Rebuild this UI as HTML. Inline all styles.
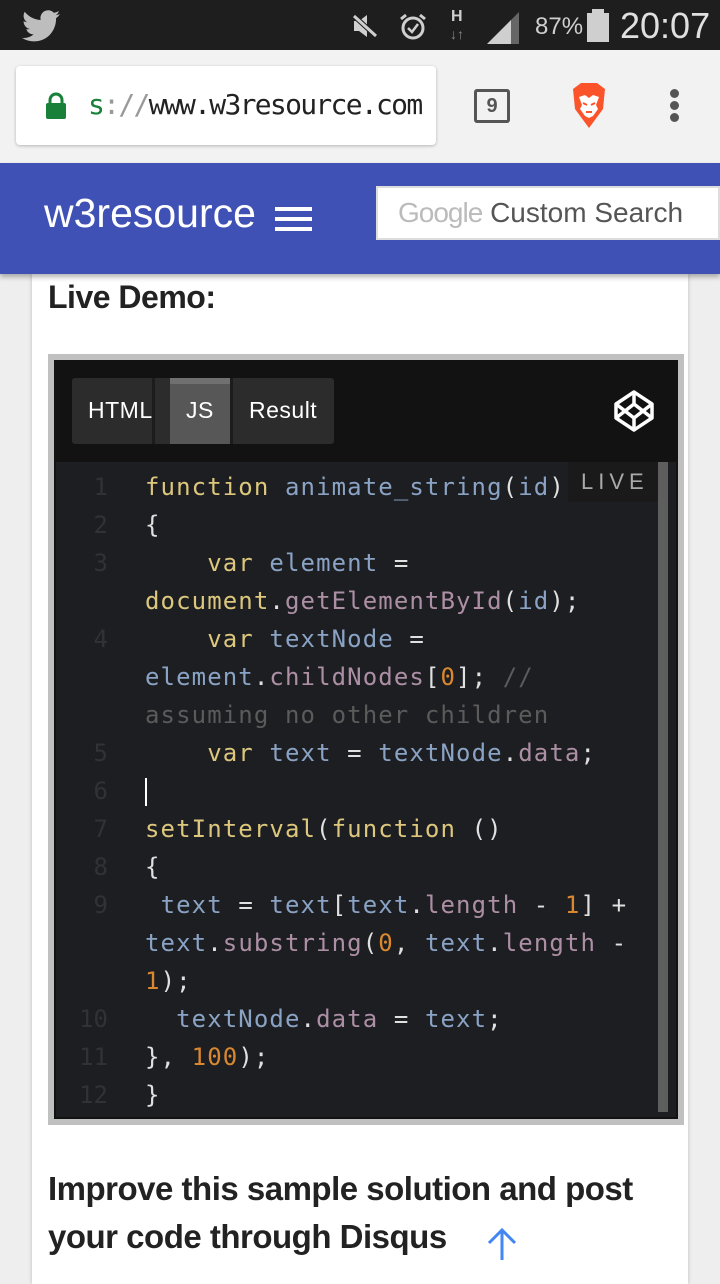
<!DOCTYPE html>
<html><head><meta charset="utf-8">
<style>
*{margin:0;padding:0;box-sizing:border-box}
body{width:720px;height:1280px;overflow:hidden;background:#eeeeee;font-family:"Liberation Sans",sans-serif;position:relative}
.abs{position:absolute}
.status{left:0;top:0;width:720px;height:50px;background:#1e1e1e}
.chrome{left:0;top:50px;width:720px;height:113px;background:#f2f2f2}
.url{left:16px;top:66px;width:420px;height:79px;background:#fff;border-radius:4px;box-shadow:0 1px 3px rgba(0,0,0,.25)}
.hdr{left:0;top:163px;width:720px;height:111px;background:#3f51b5;box-shadow:0 3px 5px rgba(0,0,0,.3)}
.card{left:32px;top:274px;width:656px;height:1010px;background:#fff;box-shadow:0 0 4px rgba(0,0,0,.2)}
.frame{left:48px;top:354px;width:636px;height:771px;background:#c0c0c0}
.inner{left:54px;top:360px;width:624px;height:759px;background:#121212}
.code{left:56px;top:462px;width:620px;height:655px;background:#1d1e22}
.ln,.cd{font-family:"DejaVu Sans Mono","Liberation Mono",monospace;font-size:24px;line-height:38px;white-space:pre}
.ln{left:56px;top:468px;width:52px;text-align:right;color:#313235}
.cd{left:145px;top:468px;color:#e0e0e0;letter-spacing:1.1px}
.k{color:#dcc77c}.v{color:#8aa3c4}.m{color:#ad8fa5}.n{color:#d9882f}.c{color:#5b5b5b}
.dot{position:absolute;left:670px;width:9px;height:9px;border-radius:50%;background:#555}
</style></head><body>
<div class="abs status"></div>
<svg class="abs" style="left:22px;top:10px" width="38" height="32" viewBox="0 0 24 20"><path fill="#bdbdbd" d="M24 2.4a9.8 9.8 0 0 1-2.8.8A4.9 4.9 0 0 0 23.3.5a9.9 9.9 0 0 1-3.1 1.2A4.9 4.9 0 0 0 11.8 6.2 14 14 0 0 1 1.7 1 4.9 4.9 0 0 0 3.2 7.6a4.9 4.9 0 0 1-2.2-.6 4.9 4.9 0 0 0 3.9 4.9 4.9 4.9 0 0 1-2.2.1 4.9 4.9 0 0 0 4.6 3.4A9.900 9.9 0 0 1 0 17.5 14 14 0 0 0 7.5 19.7c9.1 0 14-7.5 14-14v-.6A10 10 0 0 0 24 2.4z"/></svg>
<svg class="abs" style="left:350px;top:12px" width="30" height="28" viewBox="0 0 30 28"><path fill="#cfcfcf" d="M4 9h5l8-6v22l-8-6H4z"/><path stroke="#1e1e1e" stroke-width="5" d="M3 3l24 22"/><path stroke="#cfcfcf" stroke-width="3" d="M4 4l22 20"/></svg>
<svg class="abs" style="left:398px;top:12px" width="30" height="30" viewBox="0 0 30 30"><circle cx="15" cy="16" r="10" fill="none" stroke="#cfcfcf" stroke-width="3"/><path d="M10 16l4 4 6-8" fill="none" stroke="#cfcfcf" stroke-width="2.5"/><path d="M3 7l5-4M27 7l-5-4" stroke="#cfcfcf" stroke-width="3"/></svg>
<div class="abs" style="left:451px;top:8px;color:#cfcfcf;font:bold 16px 'Liberation Sans';">H</div>
<div class="abs" style="left:450px;top:26px;color:#888;font:bold 14px 'Liberation Sans';">↓↑</div>
<svg class="abs" style="left:487px;top:12px" width="32" height="32" viewBox="0 0 32 32"><path d="M0 32h24V8z" fill="#cfcfcf"/><path d="M24 8L32 0v32h-8z" fill="#666"/></svg>
<div class="abs" style="left:535px;top:13px;color:#cfcfcf;font:24px 'Liberation Sans';">87%</div>
<div class="abs" style="left:587px;top:13px;width:22px;height:29px;background:#cfcfcf"></div>
<div class="abs" style="left:592px;top:9px;width:12px;height:5px;background:#cfcfcf"></div>
<div class="abs" style="left:620px;top:5px;color:#e0e0e0;font:36px 'Liberation Sans';">20:07</div>

<div class="abs chrome"></div>
<div class="abs url"></div>
<svg class="abs" style="left:45px;top:92px" width="22" height="28" viewBox="0 0 22 28"><path d="M5 12V8a6 6 0 0 1 12 0v4" fill="none" stroke="#188038" stroke-width="3"/><rect x="1" y="11" width="20" height="16" rx="2" fill="#188038"/></svg>
<div class="abs" style="left:88px;top:88px;font:28px 'DejaVu Sans Mono',monospace;letter-spacing:-1.7px;color:#222"><span style="color:#188038">s</span><span style="color:#999">://</span>www.w3resource.com</div>
<div class="abs" style="left:474px;top:89px;width:36px;height:34px;border:3px solid #555;border-radius:3px;color:#555;font:bold 20px 'Liberation Sans';text-align:center;line-height:28px">9</div>
<svg class="abs" style="left:569px;top:83px" width="40" height="45" viewBox="0 0 40 45"><path d="M4 6l8-6h16l8 6-2 20-14 19L6 26z" fill="#fb542b"/><path d="M10 14l6-2 4 3 4-3 6 2-3 8 2 4-5 7-4 2-4-2-5-7 2-4z" fill="#fff"/><path d="M14 20l4 2M26 20l-4 2M17 29h6" stroke="#fb542b" stroke-width="2"/></svg>
<div class="dot" style="top:89px"></div>
<div class="dot" style="top:101px"></div>
<div class="dot" style="top:113px"></div>

<div class="abs card"></div>
<div class="abs hdr"></div>
<div class="abs" style="left:44px;top:190px;color:#fff;font:41px 'Liberation Sans';">w3resource</div>
<div class="abs" style="left:275px;top:207px;width:37px;height:4px;background:#fff;box-shadow:0 10px 0 #fff,0 20px 0 #fff"></div>
<div class="abs" style="left:376px;top:186px;width:344px;height:54px;background:#fff;border:2px solid #ddd"></div>
<div class="abs" style="left:398px;top:197px;font:28px 'Liberation Sans';color:#555"><span style="color:#bbb;letter-spacing:-1px">Google</span> Custom Search</div>

<div class="abs" style="left:48px;top:279px;font:bold 32px 'Liberation Sans';color:#222;letter-spacing:-0.5px">Live Demo:</div>

<div class="abs frame"></div>
<div class="abs inner"></div>
<div class="abs" style="left:72px;top:378px;width:262px;height:66px;background:#2c2c2c;border-radius:3px"></div>
<div class="abs" style="left:170px;top:378px;width:60px;height:66px;background:#575757;border-top:6px solid #707070"></div>
<div class="abs" style="left:152px;top:378px;width:3px;height:66px;background:#1c1c1c"></div>
<div class="abs" style="left:230px;top:378px;width:3px;height:66px;background:#1c1c1c"></div>
<div class="abs" style="left:88px;top:397px;color:#fff;font:23px 'Liberation Sans';letter-spacing:0.5px">HTML</div>
<div class="abs" style="left:186px;top:397px;color:#fff;font:23px 'Liberation Sans';letter-spacing:0.5px">JS</div>
<div class="abs" style="left:249px;top:397px;color:#fff;font:23px 'Liberation Sans';letter-spacing:0.5px">Result</div>
<svg class="abs" style="left:613px;top:389px" width="42" height="44" viewBox="0 0 42 44"><g fill="none" stroke="#fff" stroke-width="3.5" stroke-linejoin="round"><path d="M21 3L39 15v14L21 41 3 29V15z"/><path d="M21 3v12M21 29v12M3 15l18 14 18-14M3 29l18-14 18 14"/></g></svg>

<div class="abs code"></div>
<div class="abs" style="left:658px;top:462px;width:10px;height:650px;background:#5e5e5e"></div>
<div class="abs" style="left:568px;top:462px;width:90px;height:40px;background:#1a1a1a;color:#aaa;font:22px 'Liberation Sans';letter-spacing:5px;padding:7px 0 0 13px">LIVE</div>

<div class="abs ln">1
2
3

4


5
6
7
8
9


10
11
12</div>
<div class="abs cd"><span class="k">function</span> <span class="v">animate_string</span>(<span class="v">id</span>)
{
    <span class="k">var</span> <span class="v">element</span> =
<span class="k">document</span>.<span class="m">getElementById</span>(<span class="v">id</span>);
    <span class="k">var</span> <span class="v">textNode</span> =
<span class="v">element</span>.<span class="m">childNodes</span>[<span class="n">0</span>]; <span class="c">//</span>
<span class="c">assuming no other children</span>
    <span class="k">var</span> <span class="v">text</span> = <span class="v">textNode</span>.<span class="m">data</span>;
<span style="display:inline-block;width:2px;height:28px;background:#fff;vertical-align:middle"></span>
<span class="k">setInterval</span>(<span class="k">function</span> ()
{
 <span class="v">text</span> = <span class="v">text</span>[<span class="v">text</span>.<span class="m">length</span> - <span class="n">1</span>] +
<span class="v">text</span>.<span class="m">substring</span>(<span class="n">0</span>, <span class="v">text</span>.<span class="m">length</span> -
<span class="n">1</span>);
  <span class="v">textNode</span>.<span class="m">data</span> = <span class="v">text</span>;
}, <span class="n">100</span>);
}</div>

<div class="abs" style="left:48px;top:1165px;font:bold 33px/48px 'Liberation Sans';color:#222;letter-spacing:-0.5px;width:660px">Improve this sample solution and post<br>your code through Disqus</div>
<svg class="abs" style="left:484px;top:1226px" width="36" height="36" viewBox="0 0 36 36"><path d="M18 34V4M5 17L18 4l13 13" fill="none" stroke="#4285f4" stroke-width="3"/></svg>
</body></html>
